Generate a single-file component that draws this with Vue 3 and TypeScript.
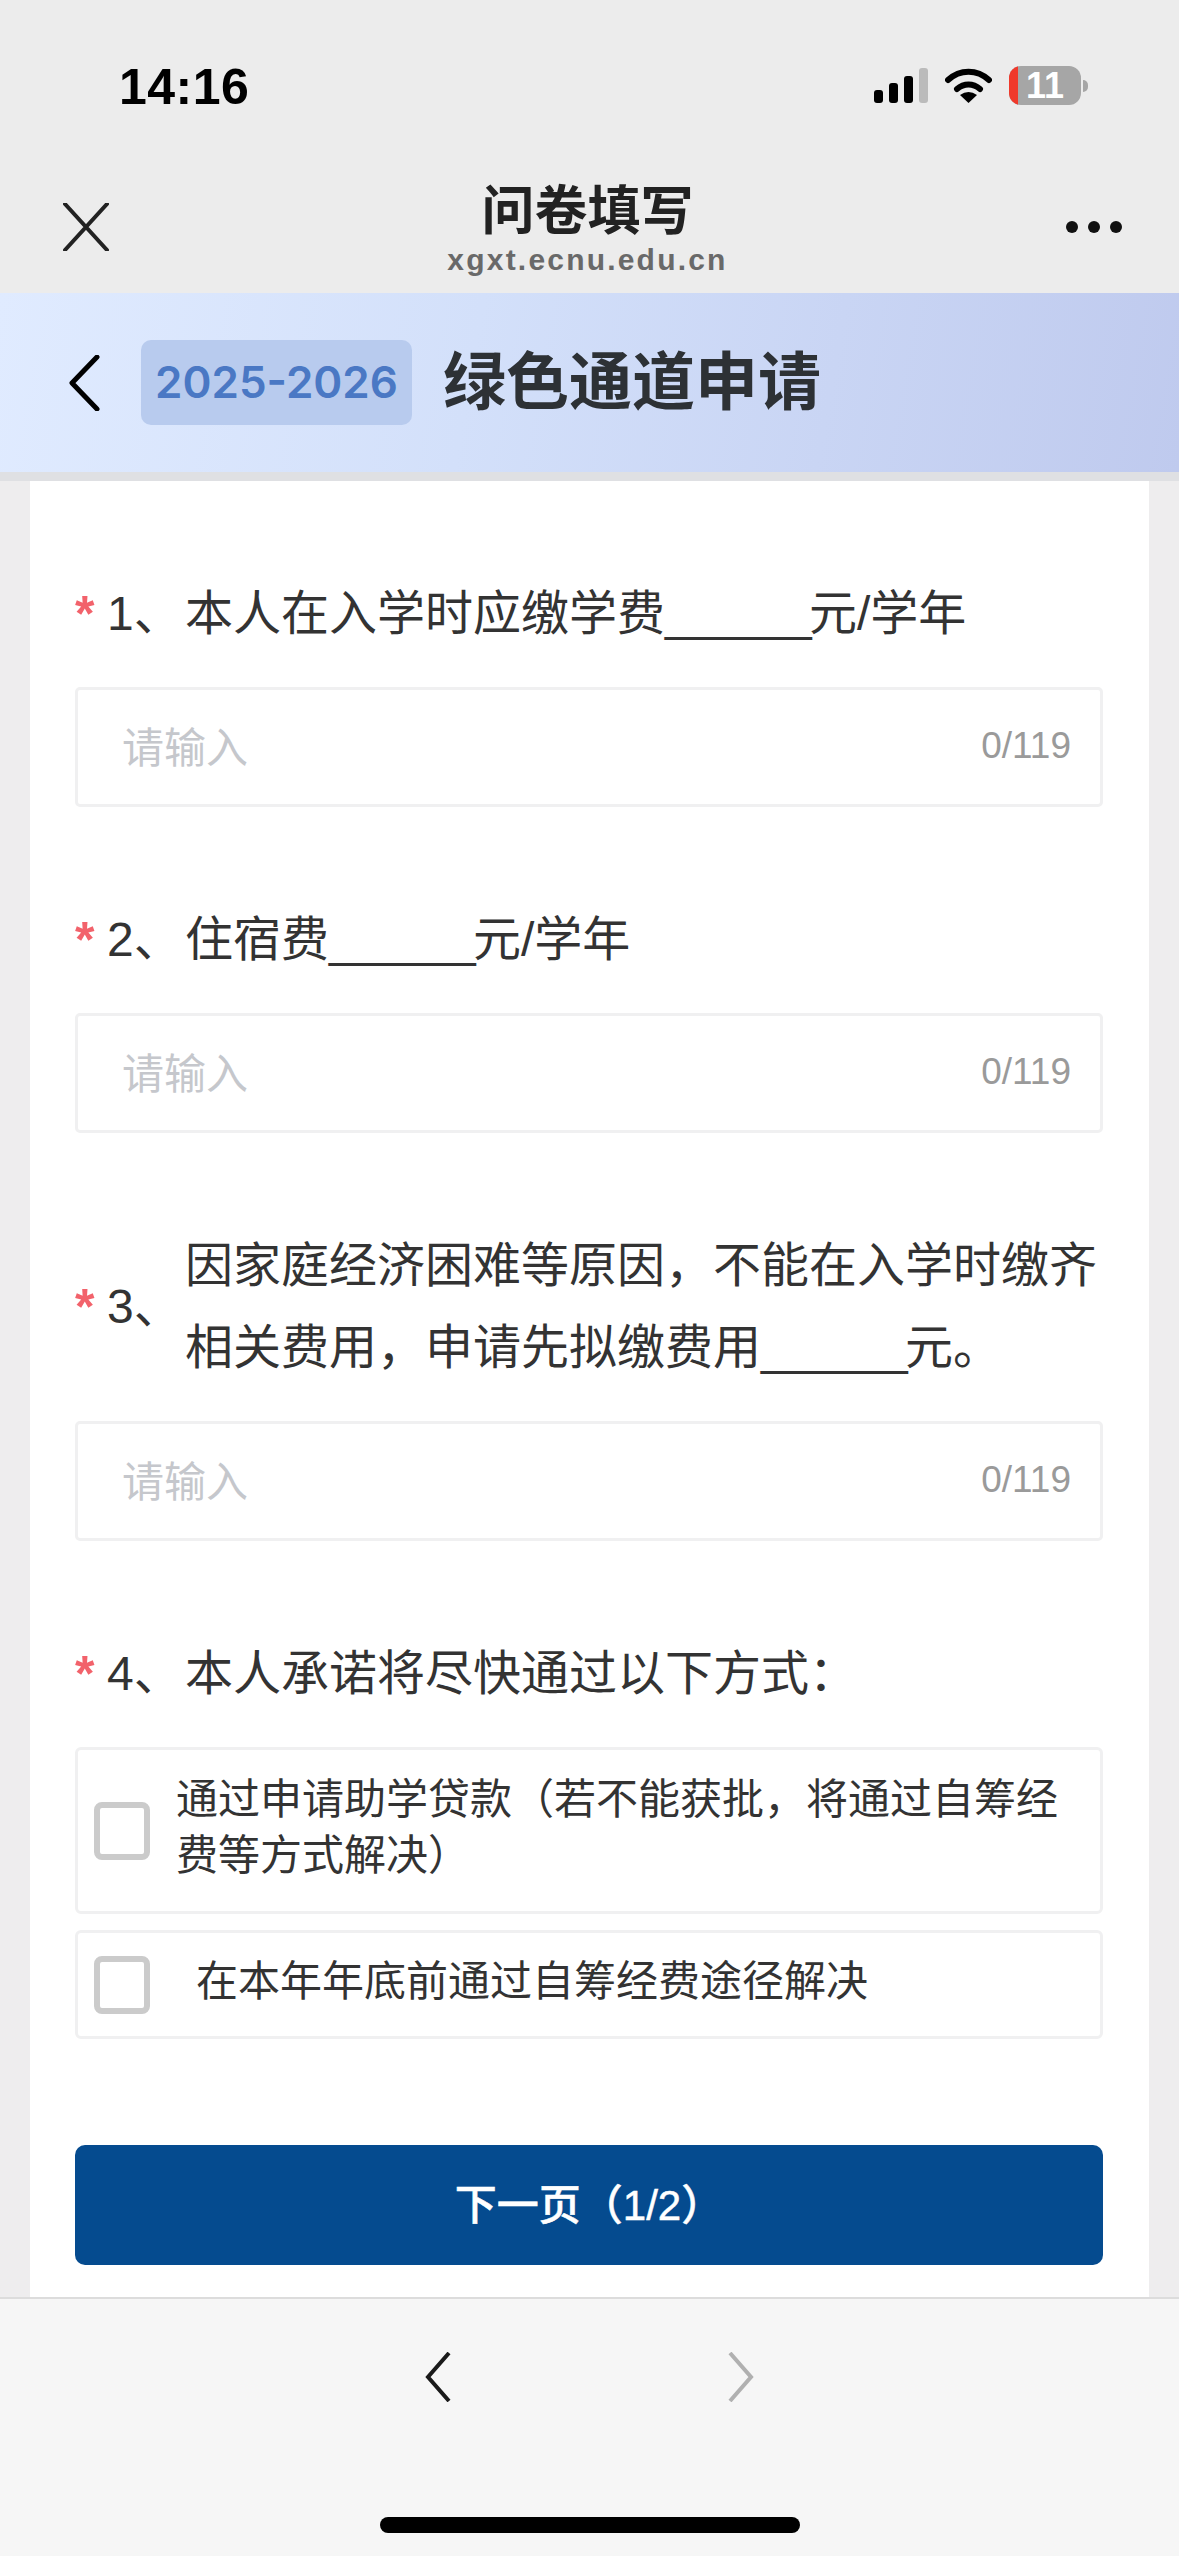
<template>
  <div class="page">
    <!-- status bar -->
    <div class="status">
      <span class="time">14:16</span>
      <div class="status-icons">
        <svg class="signal" width="54" height="36" viewBox="0 0 54 36">
          <rect x="0" y="22" width="9" height="13" rx="3" fill="#000" />
          <rect x="15" y="15" width="9" height="20" rx="3" fill="#000" />
          <rect x="30" y="8" width="9" height="27" rx="3" fill="#000" />
          <rect x="45" y="0" width="9" height="35" rx="3" fill="#bbb" />
        </svg>
        <svg class="wifi" width="47" height="36" viewBox="0 0 47 36">
          <path d="M3 12C15 1 32 1 44 12" fill="none" stroke="#000" stroke-width="6" stroke-linecap="round" />
          <path d="M12 21C19 15 28 15 35 21" fill="none" stroke="#000" stroke-width="6" stroke-linecap="round" />
          <path d="M23.5 35L15 27Q23.5 21 32 27Z" fill="#000" />
        </svg>
        <div class="battery">
          <i class="battery-low"></i>
          <span>11</span>
        </div>
        <i class="battery-nub"></i>
      </div>
    </div>

    <!-- browser nav -->
    <div class="nav">
      <svg width="46" height="48" viewBox="0 0 46 48">
        <path d="M2 1L44 47M44 1L2 47" fill="none" stroke="#222" stroke-width="4" stroke-linecap="round" />
      </svg>
      <div class="nav-title">
        <div class="nav-name">问卷填写</div>
        <div class="nav-url">xgxt.ecnu.edu.cn</div>
      </div>
      <div class="dots"><i></i><i></i><i></i></div>
    </div>

    <!-- page header -->
    <div class="header">
      <svg class="header-back" width="32" height="56" viewBox="0 0 32 56">
        <path d="M29 2L4 28L29 54" fill="none" stroke="#000" stroke-width="5" stroke-linecap="round" stroke-linejoin="round" />
      </svg>
      <span class="year">2025-2026</span>
      <h1 class="header-title">绿色通道申请</h1>
    </div>

    <!-- form -->
    <div class="body">
      <div class="question" v-for="q in questions" :key="q.no">
        <div class="label">
          <span class="star">*</span>
          <span class="no">{{ q.no }}、</span>
          <div class="text">
            <div class="line" v-for="(line, n) in q.lines" :key="n">
              <span>{{ line[0] }}</span>
              <span v-if="line.length > 1" class="blank">{{ BLANK }}</span>
              <span v-if="line.length > 1">{{ line[1] }}</span>
            </div>
          </div>
        </div>
        <div class="input">
          <span class="placeholder">请输入</span>
          <span class="count">0/119</span>
        </div>
      </div>

      <div class="question">
        <div class="label">
          <span class="star">*</span>
          <span class="no">4、</span>
          <div class="text">本人承诺将尽快通过以下方式：</div>
        </div>
        <div class="option option-tall">
          <i class="check"></i>
          <span class="option-text">通过申请助学贷款（若不能获批，将通过自筹经费等方式解决）</span>
        </div>
        <div class="option option-short">
          <i class="check"></i>
          <span class="option-text indent">在本年年底前通过自筹经费途径解决</span>
        </div>
      </div>

      <button class="next">下一页（1/2）</button>
    </div>

    <!-- browser footer -->
    <div class="footer">
      <div class="footer-nav">
        <svg width="26" height="50" viewBox="0 0 26 50">
          <path d="M24 1L3 25L24 49" fill="none" stroke="#1a1a1a" stroke-width="4" />
        </svg>
        <svg width="26" height="50" viewBox="0 0 26 50">
          <path d="M2 1L23 25L2 49" fill="none" stroke="#b0b0b0" stroke-width="4" />
        </svg>
      </div>
      <div class="home"></div>
    </div>
  </div>
</template>

<script setup lang="ts">
interface Question {
  no: number
  // Each line is [text before the blank, text after it], or just [text]
  lines: string[][]
}

const BLANK = '______'

const questions: Question[] = [
  { no: 1, lines: [['本人在入学时应缴学费', '元/学年']] },
  { no: 2, lines: [['住宿费', '元/学年']] },
  {
    no: 3,
    lines: [['因家庭经济困难等原因，不能在入学时缴齐'], ['相关费用，申请先拟缴费用', '元。']]
  }
]
</script>

<style>
html,
body {
  margin: 0;
  background: #eeedee;
}
</style>

<style scoped>
.page {
  width: 1179px;
  height: 2556px;
  overflow: hidden;
  display: flex;
  flex-direction: column;
  background: #eeedee;
  font-family: "Liberation Sans", "Noto Sans CJK SC", sans-serif;
  color: #333;
}

.status {
  height: 170px;
  flex: none;
  background: #ececec;
  display: flex;
  justify-content: space-between;
  padding: 60px 91px 0 119px;
  box-sizing: border-box;
}

.time {
  font-size: 50px;
  line-height: 55px;
  font-weight: 700;
  letter-spacing: 0.5px;
  color: #000;
}

.status-icons {
  display: flex;
  align-items: flex-start;
  padding-top: 8px;
}

.wifi {
  margin-left: 17px;
}

.battery {
  position: relative;
  width: 72px;
  height: 39px;
  margin-left: 17px;
  margin-top: -2px;
  background: #a6a6a6;
  border-radius: 12px;
  overflow: hidden;
  text-align: center;
  font-size: 36px;
  line-height: 39px;
  font-weight: 700;
  color: #fff;
}

.battery-low {
  position: absolute;
  left: 0;
  top: 0;
  bottom: 0;
  width: 9px;
  background: #f0392b;
}

.battery-nub {
  width: 5px;
  height: 12px;
  margin: 12px 0 0 2px;
  background: #a6a6a6;
  border-radius: 0 6px 6px 0;
}

.nav {
  height: 123px;
  flex: none;
  background: #ececec;
  display: flex;
  align-items: center;
  padding: 0 57px 10px 63px;
  box-sizing: border-box;
}

.nav-title {
  flex: 1;
  text-align: center;
  margin-top: 4px;
}

.nav-name {
  font-size: 53px;
  line-height: 62px;
  font-weight: 700;
  color: #222;
}

.nav-url {
  font-size: 30px;
  line-height: 34px;
  font-weight: 700;
  letter-spacing: 2.2px;
  color: #696969;
}

.dots {
  display: flex;
  gap: 10px;
}

.dots i {
  width: 12px;
  height: 12px;
  border-radius: 50%;
  background: #111;
}

.header {
  height: 179px;
  flex: none;
  display: flex;
  align-items: center;
  padding-left: 68px;
  background: linear-gradient(100deg, #e0ebff 0%, #d3e0fa 40%, #bfcaee 100%);
  border-bottom: 9px solid #dfe0e3;
}

.year {
  margin-left: 41px;
  width: 271px;
  height: 85px;
  line-height: 85px;
  text-align: center;
  border-radius: 10px;
  background: #b8cbee;
  color: #4a78c4;
  font-family: Inter, "Liberation Sans", sans-serif;
  font-size: 44px;
  font-weight: 600;
}

.header-title {
  margin: 0 0 0 31px;
  font-size: 63px;
  line-height: 85px;
  font-weight: 700;
  color: #2d3135;
}

.body {
  flex: 1;
  min-height: 0;
  margin: 0 30px;
  padding: 92px 46px 0 45px;
  background: #fff;
  overflow: hidden;
}

.question {
  margin-bottom: 92px;
}

.question:last-of-type {
  margin-bottom: 0;
}

.label {
  display: flex;
  align-items: center;
  font-size: 48px;
  line-height: 82px;
  color: #333;
}

.star {
  width: 32px;
  flex: none;
  margin-top: -1px;
  color: #f2626b;
  font-size: 50px;
  font-weight: 700;
  line-height: 1;
}

.no {
  width: 78px;
  flex: none;
}

.text {
  flex: 1;
}

.blank {
  letter-spacing: -2.7px;
}

.input {
  height: 120px;
  margin-top: 32px;
  padding: 0 29px 6px 44px;
  display: flex;
  align-items: center;
  justify-content: space-between;
  box-sizing: border-box;
  border: 3px solid #f0f0f1;
  border-radius: 5px;
}

.placeholder {
  font-size: 42px;
  color: #c5c7cc;
}

.count {
  margin-top: 4px;
  font-size: 37px;
  color: #9a9a9a;
}

.option {
  display: flex;
  align-items: center;
  padding: 0 38px 0 16px;
  border: 3px solid #f0f0f1;
  border-radius: 6px;
  box-sizing: border-box;
  font-size: 42px;
  line-height: 56px;
  color: #333;
}

.option-tall {
  height: 167px;
  margin-top: 32px;
}

.option-short {
  height: 109px;
  margin-top: 16px;
}

.check {
  width: 56px;
  height: 58px;
  flex: none;
  box-sizing: border-box;
  border: 6px solid #cbcbcb;
  border-radius: 8px;
}

.option-text {
  margin: -6px 0 0 26px;
}

.option-text.indent {
  margin-left: 46px;
}

.next {
  display: block;
  width: 100%;
  height: 120px;
  margin-top: 106px;
  padding: 0 0 7px;
  border: none;
  border-radius: 10px;
  background: #054b8f;
  color: #fff;
  font-family: inherit;
  font-size: 42px;
  font-weight: 500;
  -webkit-text-stroke: 0.5px #fff;
}

.footer {
  height: 259px;
  flex: none;
  box-sizing: border-box;
  background: #f6f6f6;
  border-top: 2px solid #dcdcdc;
  display: flex;
  flex-direction: column;
  align-items: center;
}

.footer-nav {
  display: flex;
  gap: 277px;
  margin-top: 53px;
}

.home {
  width: 420px;
  height: 16px;
  margin-top: 115px;
  border-radius: 8px;
  background: #000;
}
</style>
